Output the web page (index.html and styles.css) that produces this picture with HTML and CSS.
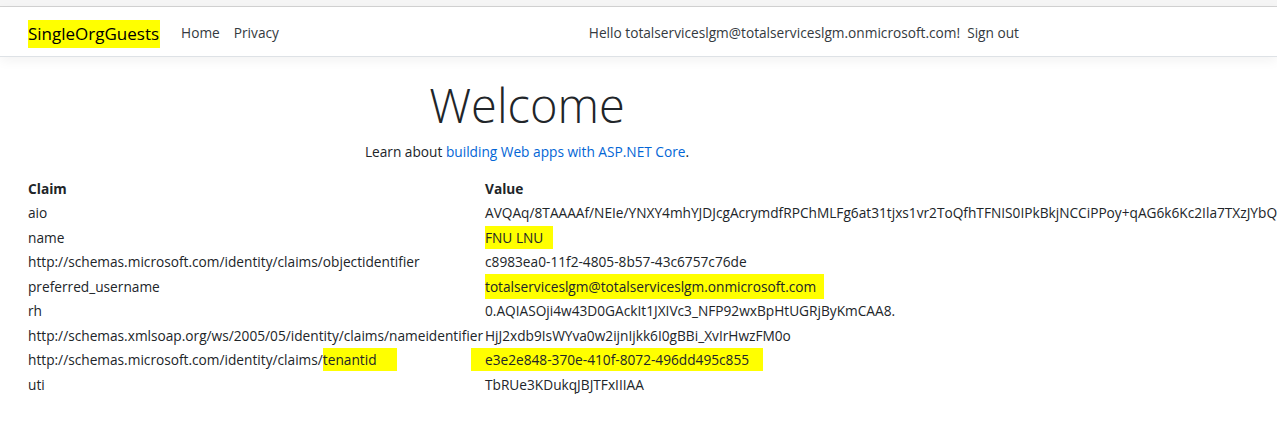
FILE: index.html
```html
<!DOCTYPE html>
<html lang="en">
<head>
<meta charset="utf-8">
<title>Home Page - SingleOrgGuests</title>
<link rel="stylesheet" href="styles.css">
</head>
<body>
<div class="page">
  <div class="topstrip"></div>
  <header class="navbar">
    <div class="container nav-inner">
      <a class="brand"><span class="hl hl-brand">SingleOrgGuests</span></a>
      <ul class="nav-left">
        <li><a class="nav-link">Home</a></li>
        <li><a class="nav-link">Privacy</a></li>
      </ul>
      <ul class="nav-right">
        <li><span class="navbar-text">Hello totalserviceslgm@totalserviceslgm.onmicrosoft.com!</span></li>
        <li><a class="nav-link">Sign out</a></li>
      </ul>
    </div>
  </header>
  <main class="container main">
    <div class="text-center">
      <h1 class="display">Welcome</h1>
      <p class="lead-line">Learn about <a class="link">building Web apps with ASP.NET Core</a>.</p>
    </div>
    <table class="claims">
      <thead>
        <tr><th>Claim</th><th>Value</th></tr>
      </thead>
      <tbody>
        <tr><td>aio</td><td>AVQAq/8TAAAAf/NEIe/YNXY4mhYJDJcgAcrymdfRPChMLFg6at31tjxs1vr2ToQfhTFNIS0IPkBkjNCCiPPoy+qAG6k6Kc2Ila7TXzJYbQk8</td></tr>
        <tr><td>name</td><td><span class="hl hl-name">FNU LNU</span></td></tr>
        <tr><td>http://schemas.microsoft.com/identity/claims/objectidentifier</td><td>c8983ea0-11f2-4805-8b57-43c6757c76de</td></tr>
        <tr><td>preferred_username</td><td><span class="hl hl-user">totalserviceslgm@totalserviceslgm.onmicrosoft.com</span></td></tr>
        <tr><td>rh</td><td>0.AQIASOji4w43D0GAckIt1JXIVc3_NFP92wxBpHtUGRjByKmCAA8.</td></tr>
        <tr><td>http://schemas.xmlsoap.org/ws/2005/05/identity/claims/nameidentifier</td><td>HjJ2xdb9IsWYva0w2ijnIjkk6I0gBBi_XvIrHwzFM0o</td></tr>
        <tr><td>http://schemas.microsoft.com/identity/claims/<span class="hl hl-tenant">tenantid</span></td><td><span class="hl hl-tid">e3e2e848-370e-410f-8072-496dd495c855</span></td></tr>
        <tr><td>uti</td><td>TbRUe3KDukqJBJTFxIIIAA</td></tr>
      </tbody>
    </table>
  </main>
</div>
</body>
</html>
```

FILE: styles.css
```css
html, body {
  margin: 0;
  padding: 0;
  background: #ffffff;
  overflow: hidden;
}
body {
  font-family: "Open Sans", "Noto Sans", sans-serif;
  font-size: 13.7px;
  line-height: 1.5;
  color: #212529;
}
.page {
  width: 1277px;
  overflow: hidden;
}
.topstrip {
  height: 6px;
  background: #f5f5f5;
  border-bottom: 1px solid #d2d2d2;
}
.container {
  width: 998px;
  padding: 0 28px;
}
.navbar {
  background: #fff;
  border-bottom: 1px solid #dee2e6;
  box-shadow: 0 4px 11px rgba(0, 0, 0, 0.05);
  padding: 9px 0 5px;
  position: relative;
}
.nav-inner {
  display: flex;
  align-items: center;
  height: 35px;
}
.brand {
  font-size: 17px;
  color: #000;
  margin-right: 14px;
  line-height: 26px;
}
.hl {
  background: #ffff00;
}
.hl-brand {
  padding: 2px 1px 3px 0;
}
.nav-left, .nav-right {
  list-style: none;
  margin: 0;
  padding: 0;
  display: flex;
  align-items: center;
}
.nav-left {
  flex: 1;
}
.nav-link {
  display: block;
  padding: 7px;
  color: #343a40;
}
.navbar-text {
  color: #343a40;
}
.main {
  padding-top: 20px;
}
.text-center {
  text-align: center;
}
.display {
  font-size: 47px;
  font-weight: 300;
  line-height: 1.2;
  margin: 0 0 9px;
  color: #212529;
}
.lead-line {
  margin: 0 0 13px;
}
.link {
  color: #0366d6;
}
.claims {
  border-spacing: 2px;
  margin-left: -2px;
  white-space: nowrap;
}
.claims th {
  text-align: left;
  font-weight: 700;
  padding: 1px 0;
  line-height: 20.5px;
}
.claims td {
  padding: 1px 0;
  line-height: 20.5px;
}
.hl-name {
  padding: 2px 10px 2px 0;
}
.hl-user {
  padding: 3px 8px 3px 0;
}
.hl-tenant {
  padding: 2px 20px 2px 0;
}
.hl-tid {
  padding: 2px 14px 2px 14px;
  margin-left: -14px;
}
```
